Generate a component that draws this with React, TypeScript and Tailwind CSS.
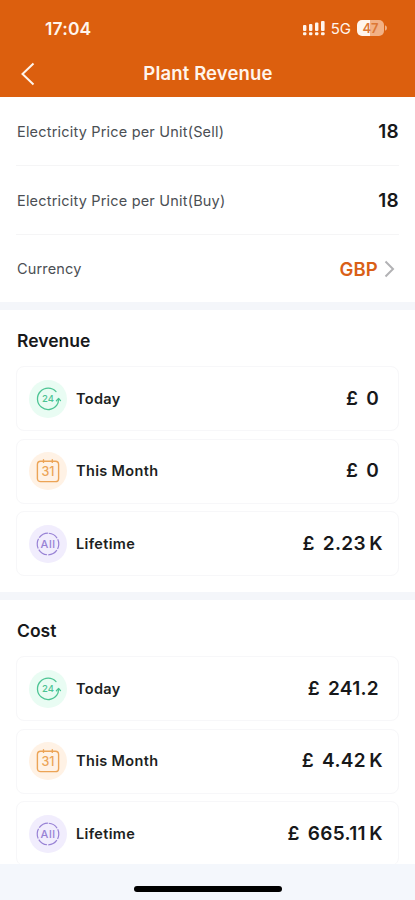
import React from 'react';

type Period = 'today' | 'month' | 'lifetime';

interface Entry {
  period: Period;
  value: string;
  unit?: string;
}

const revenue: Entry[] = [
  { period: 'today', value: '0' },
  { period: 'month', value: '0' },
  { period: 'lifetime', value: '2.23', unit: 'K' },
];

const cost: Entry[] = [
  { period: 'today', value: '241.2' },
  { period: 'month', value: '4.42', unit: 'K' },
  { period: 'lifetime', value: '665.11', unit: 'K' },
];

const TodayIcon = () => (
  <svg className="w-6 h-6 overflow-visible" viewBox="0 0 24 24" fill="none" stroke="#4cc493" strokeWidth="1.3" strokeLinecap="round" strokeLinejoin="round">
    <path d="M20 4.6A10.7 10.7 0 1 0 20.8 18.2Q22.4 16 22.5 13" />
    <path d="M20.4 13.8L22.6 11.4L24.5 13.6" />
    <text x="11.9" y="15.3" textAnchor="middle" fontSize="9.5" fontWeight="500" fill="#4cc493" stroke="none">24</text>
  </svg>
);

const MonthIcon = () => (
  <svg className="w-6 h-6" viewBox="0 0 24 24" fill="none" stroke="#eca456" strokeWidth="1.4" strokeLinecap="round">
    <rect x="1.4" y="2.2" width="21.2" height="20.4" rx="3.2" />
    <path d="M7.5 .8V3.4M16.3 .8V3.4" />
    <text x="12" y="16.7" textAnchor="middle" fontSize="12.5" fontWeight="500" fill="#eca456" stroke="none">31</text>
  </svg>
);

const LifetimeIcon = () => (
  <svg className="w-6 h-6" viewBox="0 0 24 24" fill="none" stroke="#9882d5" strokeWidth="1.2">
    <circle cx="12" cy="12" r="10.8" strokeDasharray="10 1.31" transform="rotate(-86 12 12)" />
    <text x="12" y="15.9" textAnchor="middle" fontSize="11" fontWeight="500" letterSpacing=".5" fill="#9882d5" stroke="none">All</text>
  </svg>
);

const periods = {
  today: { label: 'Today', bg: 'bg-[#e9fcf3]', icon: <TodayIcon /> },
  month: { label: 'This Month', bg: 'bg-[#fff2e5]', icon: <MonthIcon /> },
  lifetime: { label: 'Lifetime', bg: 'bg-[#f1edfd]', icon: <LifetimeIcon /> },
};

const EntryCard: React.FC<{ entry: Entry }> = ({ entry }) => {
  const { label, bg, icon } = periods[entry.period];

  return (
    <div className={`flex items-center h-[65px] shrink-0 pl-3 ${entry.unit ? 'pr-[15px]' : 'pr-[19px]'} border-[1.5px] border-[#f7f7f9] rounded-lg`}>
      <div className={`flex items-center justify-center w-[38px] h-[38px] rounded-full ${bg}`}>{icon}</div>
      <span className="ml-[9px] text-[14.5px] font-semibold tracking-[.35px] text-[#1d1f22]">{label}</span>
      <div className="flex ml-auto pt-px text-[19px] font-semibold tracking-[.3px] text-[#17181a]">
        <span>£</span>
        <span className="ml-2">{entry.value}</span>
        {entry.unit && <span className="ml-[3.5px]">{entry.unit}</span>}
      </div>
    </div>
  );
};

const Section: React.FC<{ title: string; entries: Entry[] }> = ({ title, entries }) => (
  <section className="h-[290px] px-4 border-t-8 border-[#f4f6fa]">
    <h2 className="h-14 pt-[17px] pl-px text-[17.5px] leading-7 font-semibold text-[#17181a]">{title}</h2>
    <div className="flex flex-col gap-[7.5px]">
      {entries.map((entry) => (
        <EntryCard key={entry.period} entry={entry} />
      ))}
    </div>
  </section>
);

const PriceRow: React.FC<{ label: string; value: string }> = ({ label, value }) => (
  <div className="flex items-center justify-between h-[69px] pl-px pt-px border-b-[1.5px] border-[#f5f5f6]">
    <span className="text-[14.5px] tracking-[.19px] text-[#4b4f54]">{label}</span>
    <span className="pt-px text-[19px] font-semibold tracking-[.3px] text-[#17181a]">{value}</span>
  </div>
);

const App: React.FC = () => {
  return (
    <div className="flex flex-col w-[415px] h-[900px] overflow-hidden bg-white font-['Inter',sans-serif]">
      <header className="h-[97px] shrink-0 bg-[#dc5f0e] text-[#fff5ec]">
        <div className="flex items-center h-[51px] pt-1.5 pl-[45px] pr-[27px]">
          <span className="pt-px text-[17.5px] font-semibold tracking-[.15px]">17:04</span>
          <svg className="ml-auto mb-0.5 w-[22px] h-4" viewBox="0 0 22 16" fill="currentColor">
            <rect x="0" y="5" width="3.4" height="6" rx="1" />
            <rect x="6" y="4" width="3.4" height="7" rx="1" />
            <rect x="12" y="2.5" width="3.4" height="8.5" rx="1" />
            <rect x="18" y="1" width="3.6" height="10" rx="1" />
            <rect x="0" y="12.2" width="3.4" height="3" rx="1" />
            <rect x="6" y="12.2" width="3.4" height="3" rx="1" />
            <rect x="12" y="12.2" width="3.4" height="3" rx="1" />
            <rect x="18" y="12.2" width="3.6" height="3" rx="1" />
          </svg>
          <span className="ml-1.5 pt-px text-[15px]">5G</span>
          <svg className="ml-1.5 mb-0.5 w-[31px] h-4" viewBox="0 0 31 16">
            <path d="M5 0H13V16H5A5 5 0 0 1 0 11V5A5 5 0 0 1 5 0Z" fill="#fff5ec" />
            <path d="M13 0H22A5 5 0 0 1 27 5V11A5 5 0 0 1 22 16H13Z" fill="#f2b185" />
            <path d="M28 5.3Q30 6 30 8T28 10.7Z" fill="#f2b185" />
            <text x="13.5" y="12.9" textAnchor="middle" fontSize="13" fontWeight="600" fill="#dc7835">47</text>
          </svg>
        </div>
        <div className="grid grid-cols-[1fr_auto_1fr] items-center h-[46px] pl-[21px] pr-5">
          <svg className="w-4 h-6" viewBox="0 0 16 24" fill="none" stroke="currentColor" strokeWidth="2">
            <path d="M12.5 1.5L1.5 12L12.5 22.5" />
          </svg>
          <h1 className="text-[18.5px] font-semibold tracking-[.15px]">Plant Revenue</h1>
        </div>
      </header>

      <main className="flex-1 min-h-0 overflow-hidden">
        <div className="h-[205px] px-4">
          <PriceRow label="Electricity Price per Unit(Sell)" value="18" />
          <PriceRow label="Electricity Price per Unit(Buy)" value="18" />
          <div className="flex items-center h-[67px] pl-px">
            <span className="pt-px text-[14.5px] tracking-[.16px] text-[#4b4f54]">Currency</span>
            <span className="ml-auto pt-0.5 text-[18.5px] font-semibold tracking-[.2px] text-[#d95f17]">GBP</span>
            <svg className="ml-1.5 mr-1 w-[11px] h-[18px]" viewBox="0 0 11 18" fill="none" stroke="#b2b2b5" strokeWidth="2">
              <path d="M1.5 1.5L9 9L1.5 16.5" />
            </svg>
          </div>
        </div>
        <Section title="Revenue" entries={revenue} />
        <Section title="Cost" entries={cost} />
      </main>

      <footer className="flex justify-center h-[36px] pt-[22px] shrink-0 bg-[#f4f7fc]">
        <div className="w-[148px] h-1.5 rounded-full bg-black" />
      </footer>
    </div>
  );
};

export default App;
